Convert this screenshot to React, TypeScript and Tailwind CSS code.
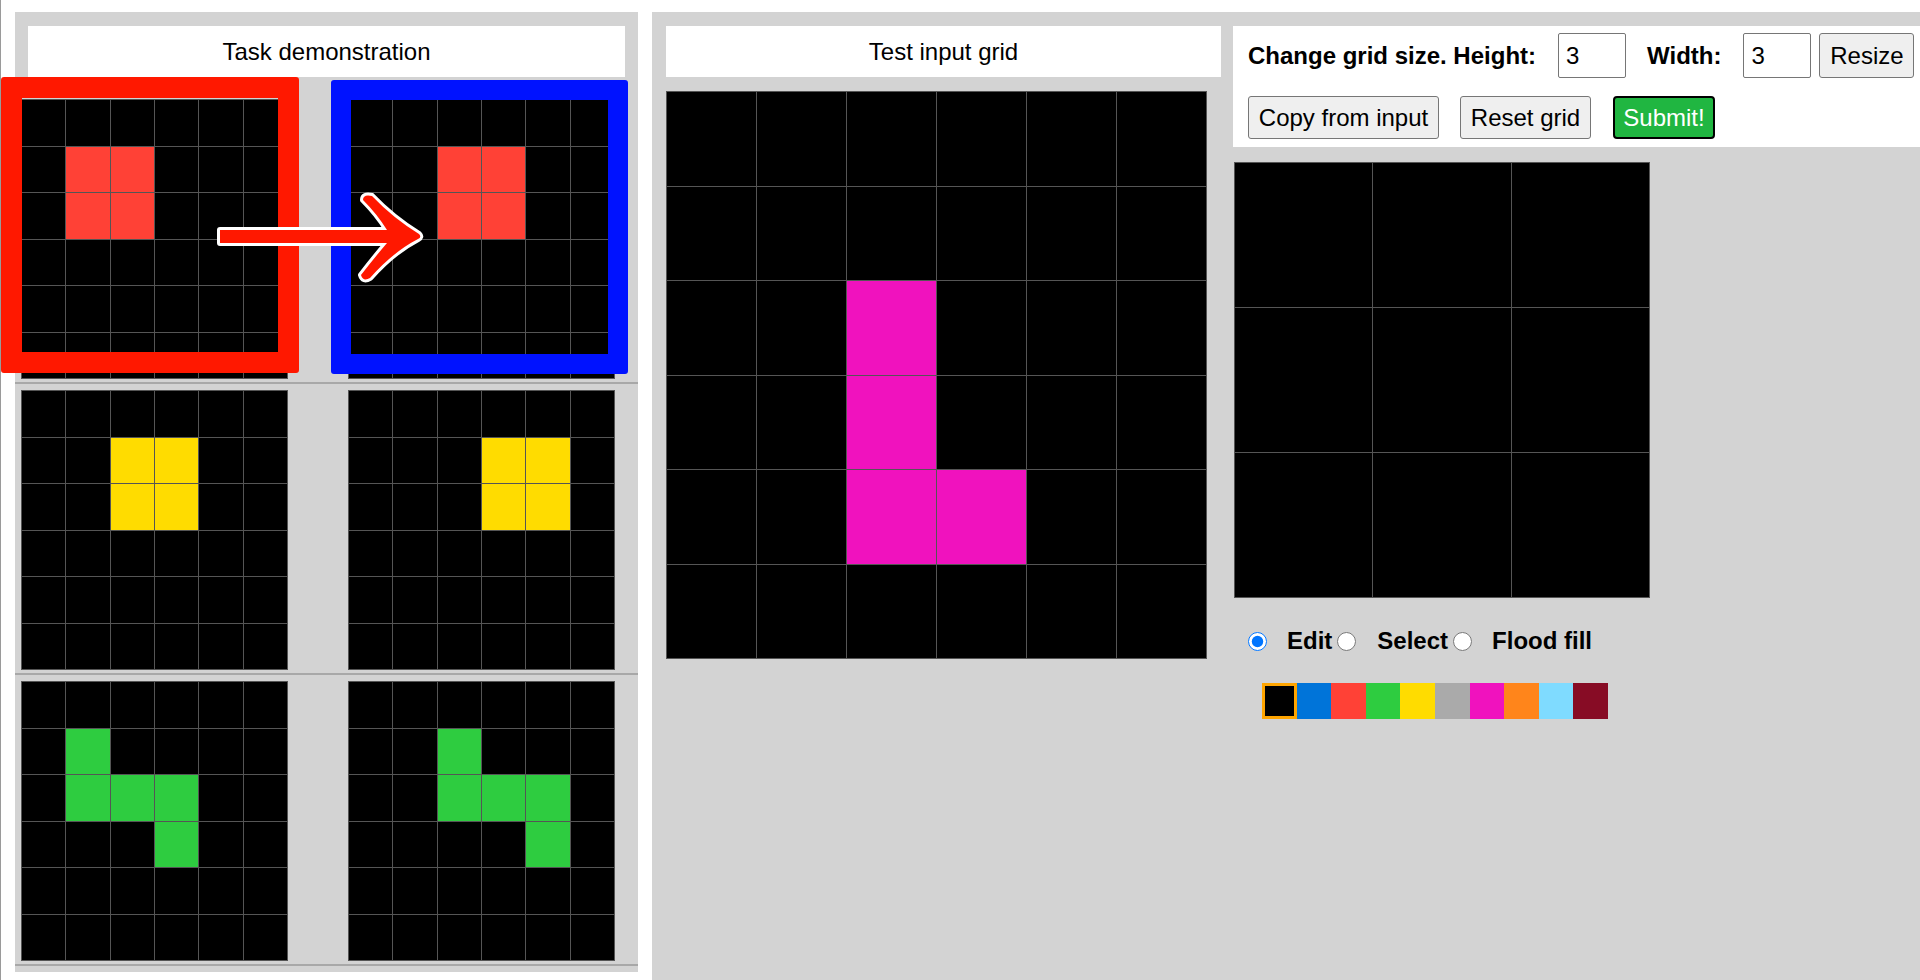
import React from 'react';

// ARC palette
const COLORS = ['#000000', '#0074D9', '#FF4136', '#2ECC40', '#FFDC00', '#AAAAAA', '#F012BE', '#FF851B', '#7FDBFF', '#870C25'];

type Cells = [number, number, number][];

const makeGrid = (h: number, w: number, cells: Cells): number[][] => {
  const g = Array.from({ length: h }, () => Array(w).fill(0));
  cells.forEach(([r, c, v]) => { g[r][c] = v; });
  return g;
};

const pairs: number[][][][] = [
  [
    makeGrid(6, 6, [[1, 1, 2], [1, 2, 2], [2, 1, 2], [2, 2, 2]]),
    makeGrid(6, 6, [[1, 2, 2], [1, 3, 2], [2, 2, 2], [2, 3, 2]]),
  ],
  [
    makeGrid(6, 6, [[1, 2, 4], [1, 3, 4], [2, 2, 4], [2, 3, 4]]),
    makeGrid(6, 6, [[1, 3, 4], [1, 4, 4], [2, 3, 4], [2, 4, 4]]),
  ],
  [
    makeGrid(6, 6, [[1, 1, 3], [2, 1, 3], [2, 2, 3], [2, 3, 3], [3, 3, 3]]),
    makeGrid(6, 6, [[1, 2, 3], [2, 2, 3], [2, 3, 3], [2, 4, 3], [3, 4, 3]]),
  ],
];

const testInput = makeGrid(6, 6, [[2, 2, 6], [3, 2, 6], [4, 2, 6], [4, 3, 6]]);
const testOutput = makeGrid(3, 3, []);

interface GridViewProps {
  grid: number[][];
  className: string;
}

const GridView: React.FC<GridViewProps> = ({ grid, className }) => (
  <div className={`grid bg-[#555555] gap-px border border-[#555555] shrink-0 ${className}`}>
    {grid.flat().map((v, i) => (
      <div key={i} style={{ backgroundColor: COLORS[v] }} />
    ))}
  </div>
);

const Button: React.FC<{ label: string; className?: string }> = ({ label, className = '' }) => (
  <button className={`h-[43px] bg-[#efefef] border border-[#767676] rounded-[3px] text-[24px] text-black flex items-center justify-center ${className}`}>
    {label}
  </button>
);

export default function App() {
  return (
    <div className="relative w-[1920px] h-[980px] overflow-hidden bg-white border-l border-[#9a9a9a] flex items-start pt-[12px] pl-[14px] gap-[14px] font-['Liberation_Sans',Arial,sans-serif] text-black">
      {/* Task demonstration */}
      <div className="w-[623px] h-[960px] shrink-0 bg-[#d3d3d3] pt-[14px]">
        <div className="mx-[13px] h-[51px] bg-white flex items-center justify-center text-[24px]">Task demonstration</div>
        <div className="mt-[16px]">
          {pairs.map((pair, idx) => (
            <div key={idx} className="flex gap-[60px] pl-[6px] pt-[6px] pb-[3px] border-b-2 border-[#a8a8a8]">
              <GridView grid={pair[0]} className="w-[267px] h-[280px] grid-cols-6 grid-rows-6" />
              <GridView grid={pair[1]} className="w-[267px] h-[280px] grid-cols-6 grid-rows-6" />
            </div>
          ))}
        </div>
      </div>

      {/* Test area */}
      <div className="flex-1 h-[968px] bg-[#d3d3d3] pt-[14px] pl-[14px] flex gap-[12px]">
        <div className="w-[555px] shrink-0">
          <div className="h-[51px] bg-white flex items-center justify-center text-[24px]">Test input grid</div>
          <GridView grid={testInput} className="mt-[14px] w-[541px] h-[568px] grid-cols-6 grid-rows-6" />
        </div>

        <div className="flex-1">
          <div className="h-[121px] bg-white pl-[15px] pt-[7px]">
            <div className="flex items-center h-[45px]">
              <span className="text-[24px] font-bold">Change grid size. Height:</span>
              <div className="ml-[22px] w-[68px] h-[45px] bg-white border border-[#767676] rounded-[2px] flex items-center pl-[7px] text-[24px]">3</div>
              <span className="ml-[21px] text-[24px] font-bold">Width:</span>
              <div className="ml-[22px] w-[68px] h-[45px] bg-white border border-[#767676] rounded-[2px] flex items-center pl-[7px] text-[24px]">3</div>
              <Button label="Resize" className="ml-[8px] w-[95px] !h-[45px]" />
            </div>
            <div className="flex items-center mt-[18px]">
              <Button label="Copy from input" className="w-[191px]" />
              <Button label="Reset grid" className="ml-[21px] w-[131px]" />
              <button className="ml-[22px] w-[102px] h-[43px] bg-[#20b641] border-2 border-black rounded-[4px] text-[24px] text-white flex items-center justify-center">
                Submit!
              </button>
            </div>
          </div>

          <GridView grid={testOutput} className="mt-[15px] ml-[1px] w-[416px] h-[436px] grid-cols-3 grid-rows-3" />

          <div className="mt-[31px] ml-[15px] h-[24px] flex items-center text-[24px] font-bold">
            <input type="radio" name="mode" defaultChecked className="w-[19px] h-[19px] m-0 accent-[#0075ff]" />
            <span className="ml-[20px]">Edit</span>
            <input type="radio" name="mode" className="ml-[5px] w-[19px] h-[19px] m-0" />
            <span className="ml-[21px]">Select</span>
            <input type="radio" name="mode" className="ml-[5px] w-[19px] h-[19px] m-0" />
            <span className="ml-[20px]">Flood fill</span>
          </div>

          <div className="mt-[30px] ml-[29px] flex">
            {COLORS.map((c, i) => (
              <div
                key={c}
                className={`w-[34.6px] h-[36px] ${i === 0 ? 'border-[3px] border-[#ffa500]' : ''}`}
                style={{ backgroundColor: c }}
              />
            ))}
          </div>
        </div>
      </div>

      {/* Annotations over the first demonstration pair */}
      <div className="absolute left-0 top-[77px] w-[298px] h-[296px] border-[21px] border-[#ff1800] rounded-[3px] pointer-events-none" />
      <div className="absolute left-[330px] top-[80px] w-[297px] h-[294px] border-[20px] border-[#0012ff] rounded-[3px] pointer-events-none" />
      <svg className="absolute left-[210px] top-[185px] pointer-events-none" width="220" height="105" viewBox="0 0 220 105">
        <path
          d="M9,45 L176,45 Q166,29 152,15 Q152,9 161,11 Q182,33 208,49 Q211,52 207,54 Q182,67 159,93 Q152,97 150,90 Q164,72 176,58 L9,58 Z"
          fill="#ff1800"
          stroke="#ffffff"
          strokeWidth="6"
          strokeLinejoin="round"
          paintOrder="stroke"
        />
      </svg>
    </div>
  );
}
